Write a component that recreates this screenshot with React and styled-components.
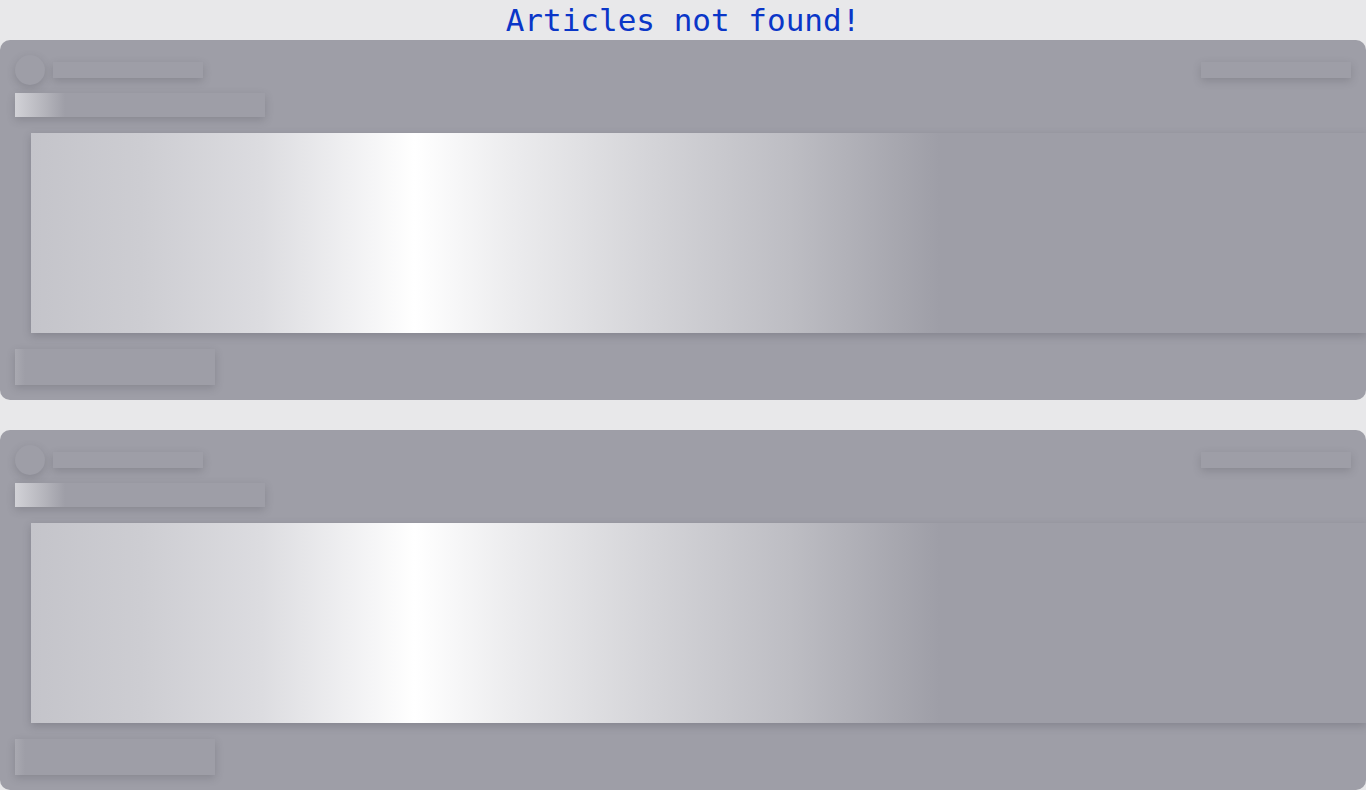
import React from 'react'
import styled, { createGlobalStyle } from 'styled-components'

const GlobalStyle = createGlobalStyle`
  html, body {
    margin: 0;
    padding: 0;
    background: #e8e8ea;
  }
  body {
    font-family: "DejaVu Sans Mono", "Liberation Mono", monospace;
    overflow-x: hidden;
  }
`

const Page = styled.div`
  display: flex;
  flex-direction: column;
  gap: 30px;
`

const Title = styled.h1`
  margin: 0 0 -30px;
  height: 40px;
  line-height: 40px;
  text-align: center;
  font-family: "DejaVu Sans Mono", "Liberation Mono", monospace;
  font-weight: normal;
  font-size: 31px;
  color: #0a36c8;
`

const Card = styled.div`
  display: flex;
  flex-direction: column;
  gap: 16px;
  padding: 15px;
  background: #9e9ea7;
  border-radius: 10px;
  overflow: hidden;
`

const Header = styled.div`
  display: flex;
  align-items: center;
  justify-content: space-between;
  margin-bottom: -8px;
`

const Author = styled.div`
  display: flex;
  align-items: center;
  gap: 8px;
`

const Bone = styled.div`
  width: ${(p) => p.$w}px;
  height: ${(p) => p.$h}px;
  flex-shrink: 0;
  background: ${(p) => p.$shine || '#9e9ea7'};
  box-shadow: 0 3px 8px rgba(60, 60, 70, 0.22);
`

const Avatar = styled(Bone)`
  border-radius: 50%;
`

const Picture = styled.div`
  margin-left: 16px;
  width: 100%;
  height: 200px;
  flex-shrink: 0;
  background: linear-gradient(
    90deg,
    #c4c4ca 0px,
    #cdcdd2 110px,
    #dcdce0 230px,
    #ffffff 384px,
    #ececee 480px,
    #d4d4d8 620px,
    #bdbdc3 760px,
    #a6a6ae 870px,
    #9e9ea7 909px
  );
  box-shadow: 0 3px 8px rgba(60, 60, 70, 0.25);
`

const titleShine = 'linear-gradient(90deg, #d2d2d7 0px, #b4b4bb 30px, #9e9ea7 50px)'
const footShine = 'linear-gradient(90deg, #a9a9b1 0px, #9e9ea7 10px)'

const SkeletonCard = () => (
  <Card>
    <Header>
      <Author>
        <Avatar $w={30} $h={30} />
        <Bone $w={150} $h={16} />
      </Author>
      <Bone $w={150} $h={16} />
    </Header>
    <Bone $w={250} $h={24} $shine={titleShine} />
    <Picture />
    <Bone $w={200} $h={36} $shine={footShine} />
  </Card>
)

export default function App() {
  return (
    <>
      <GlobalStyle />
      <Page>
        <Title>Articles not found!</Title>
        <SkeletonCard />
        <SkeletonCard />
      </Page>
    </>
  )
}
